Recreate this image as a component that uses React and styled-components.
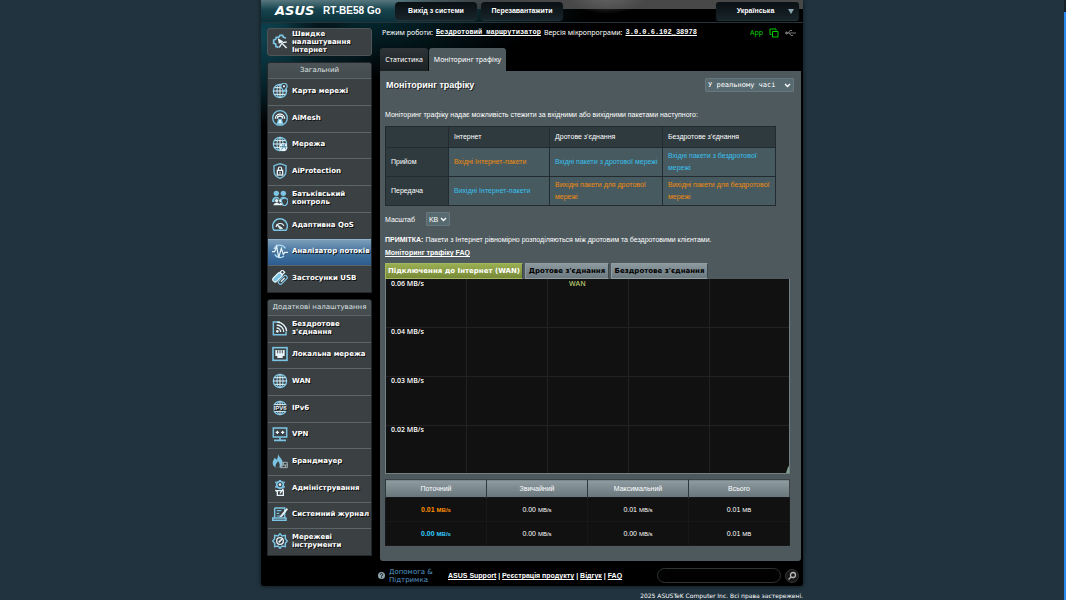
import styled, { createGlobalStyle } from 'styled-components'

const GlobalStyle = createGlobalStyle`
    * {
        box-sizing: border-box;
    }

    body {
        margin: 0;
        overflow: hidden;
        background-color: #21333e;
        color: #fff;
        font: 7px/9px 'Liberation Sans', Arial, sans-serif;
    }

    a {
        color: inherit;
    }

    button, input, select {
        margin: 0;
        font: inherit;
        color: inherit;
    }
`

const Page = styled.div`
    padding-right: 2px;
`

const ScrollTrack = styled.div`
    position: fixed;
    top: 0;
    right: 0;
    bottom: 0;
    width: 2px;
    padding-top: 12px;
    background-color: #16202b;

    &::before {
        content: '';
        display: block;
        height: 100%;
        background-color: #2b8af0;
    }
`

const Shell = styled.div`
    max-width: 542px;
    margin: 0 auto;
    border-radius: 0 0 3px 3px;
    background:
        radial-gradient(ellipse 36px 60px at 58px 28px, rgba(0, 8, 12, 0.6), transparent),
        radial-gradient(ellipse 120px 90px at 0 34px, #0d4350, #062229 60%, transparent),
        radial-gradient(ellipse 160px 60px at 110px 20px, #04272f, transparent),
        #000;
    box-shadow: 0 0 4px #0b141a;
`

const Header = styled.header`
    display: flex;
    align-items: center;
    height: 23px;
    padding: 0 4px 1px 14px;
    border-bottom: 1px solid #25343a;
    background:
        radial-gradient(ellipse 40px 20px at 346px -6px, #666, transparent),
        linear-gradient(to right, transparent 25%, #484848 50%) 0 0 / 100% 9px no-repeat,
        linear-gradient(to right, transparent 25%, #000 60%),
        linear-gradient(to bottom, #57777f 0, #16434d 10px, #0b3039 23px);
`

const Logo = styled.span`
    width: 48px;
    padding-top: 1px;
    font: italic bold 13px/14px 'DejaVu Sans', sans-serif;
`

const Model = styled.span`
    width: 72px;
    padding-top: 1px;
    font-weight: bold;
    font-size: 10px;
    line-height: 14px;
    white-space: nowrap;
`

const HeaderButton = styled.button`
    width: 82px;
    height: 18px;
    margin-right: 4px;
    padding: 0;
    border: 0;
    border-radius: 4px;
    background: linear-gradient(to bottom, #0a1013, #17242a);
    box-shadow: 0 1px 1px #26353b;
    font-weight: bold;
`

const LanguageBox = styled.div`
    position: relative;
    width: 83px;
    margin-left: auto;
`

const Language = styled.select`
    display: block;
    width: 100%;
    height: 18px;
    padding: 0 18px 0 14px;
    appearance: none;
    border: 0;
    border-radius: 3px;
    background: linear-gradient(to bottom, #0a1013, #17242a);
    box-shadow: 0 1px 1px #26353b;
    font-weight: bold;
    text-align: center;
    text-align-last: center;
`

const LanguageArrow = styled.span`
    position: absolute;
    top: 7px;
    right: 5px;
    border: 3px solid transparent;
    border-top: 5px solid #8ba6b0;
    pointer-events: none;
`

const Columns = styled.div`
    display: flex;
    align-items: flex-start;
    padding: 5px 2px 0 6px;
`

const Sidebar = styled.nav`
    flex: 0 0 105px;
    margin-right: 8px;
    font-family: 'DejaVu Sans', Verdana, sans-serif;
`

const MenuGroup = styled.section`
    margin-bottom: 6px;
    overflow: hidden;
    border: 1px solid #22282b;
    border-radius: 3px 3px 0 0;
    background-color: #3b4042;
`

const MenuHeading = styled.h2`
    margin: 0;
    height: 15px;
    background: linear-gradient(to bottom, #4b5356, #444b4e);
    color: #dfe3e4;
    font-weight: normal;
    font-size: 7px;
    line-height: 15px;
    text-align: center;
    white-space: nowrap;
`

const MenuList = styled.div`
    display: grid;
    grid-template-rows: repeat(${(props) => props.$rows}, 1fr);
    height: ${(props) => props.$height}px;
`

const MenuLink = styled.a`
    display: flex;
    align-items: center;
    gap: 4px;
    min-height: 26px;
    padding: 0 0 2px 4px;
    border-top: 1px solid ${(props) => (props.$active ? '#8fb4d2' : '#5c6669')};
    background: ${(props) => (props.$active ? 'linear-gradient(to bottom, #7b9dba, #44729d 50%, #2c5d90)' : '#3b4042')};
    font-weight: bold;
    line-height: 8px;
    text-decoration: none;
    text-shadow: 1px 1px 0 #111;

    svg {
        flex: none;
    }
`

const WizardLink = styled(MenuLink)`
    height: 28px;
    margin-bottom: 6px;
    padding: 0 0 0 4px;
    border: 1px solid #4c5558;
    border-radius: 3px;
`

const Main = styled.main`
    flex: 1;
    min-width: 0;
`

const InfoBar = styled.div`
    display: flex;
    align-items: center;
    gap: 3px;
    height: 9px;
    padding: 0 5px 0 2px;
    font-family: 'Noto Sans', sans-serif;
    white-space: nowrap;
`

const MonoLink = styled.a`
    font: bold 7px/9px 'Liberation Mono', monospace;
`

const Status = styled.span`
    display: flex;
    align-items: center;
    gap: 6px;
    margin-left: auto;
    color: #0c0;
`

const PageTabs = styled.div`
    display: flex;
    gap: 1px;
    margin-top: 11px;
`

const PageTab = styled.button`
    width: ${(props) => props.$width}px;
    height: 23px;
    padding: 0;
    border: 0;
    border-radius: 3px 3px 0 0;
    background: ${(props) => (props.$active ? '#4d595d' : 'linear-gradient(to bottom, #2d3437, #1c2123)')};
    font-family: 'Noto Sans', sans-serif;
    white-space: nowrap;
`

const Panel = styled.div`
    padding: 7px 11px 15px 5px;
    border-radius: 0 0 3px 3px;
    background-color: #4d595d;
`

const TitleRow = styled.div`
    display: flex;
    align-items: center;
    justify-content: space-between;
    margin-right: -4px;
    padding-left: 1px;
`

const Title = styled.h1`
    margin: 0;
    font-size: 9px;
    line-height: 14px;
    text-shadow: 1px 1px 0 #222;
`

const SelectBox = styled.div`
    position: relative;

    svg {
        position: absolute;
        top: 5px;
        right: 3px;
        pointer-events: none;
    }
`

const Select = styled.select`
    display: block;
    width: ${(props) => props.$width}px;
    height: 14px;
    padding: 0 2px;
    appearance: none;
    border: 1px solid #69777d;
    border-radius: 1px;
    background-color: #576a70;
    font-family: ${(props) => (props.$mono ? "'DejaVu Sans Mono', monospace" : 'inherit')};
`

const Text = styled.p`
    margin: 0;
    white-space: nowrap;
`

const Intro = styled(Text)`
    margin-top: 18px;
`

const FormTable = styled.table`
    width: 391px;
    margin-top: 7px;
    table-layout: fixed;
    border-collapse: collapse;
    line-height: 12px;

    th, td {
        height: 29px;
        padding: 0 0 0 5px;
        border: 1px solid #222c30;
        text-align: left;
        font-weight: normal;
    }

    th {
        background-color: #2f3a3e;
    }

    thead th {
        height: 21px;
    }

    td {
        background-color: #475a5f;
    }
`

const PacketCell = styled.td`
    color: ${(props) => (props.$incoming ? '#f08c10' : '#38c0ee')};
`

const ScaleRow = styled.div`
    display: flex;
    align-items: center;
    gap: 11px;
    margin-top: 6px;
`

const Note = styled(Text)`
    margin: 9px 0 4px;
`

const GraphTabs = styled.div`
    display: flex;
    gap: 2px;
    margin-top: 6px;
`

const GraphTab = styled.button`
    width: ${(props) => props.$width}px;
    height: 16px;
    padding: 0;
    border: 1px solid ${(props) => (props.$active ? '#a3b760' : '#8f9da3')};
    border-right-color: #3c474b;
    background: ${(props) => (props.$active
        ? 'linear-gradient(to bottom, #9aae52, #788a37)'
        : 'linear-gradient(to bottom, #8b989e, #6c7a80)')};
    color: ${(props) => (props.$active ? '#fff' : '#000')};
    font: bold 7px/9px 'DejaVu Sans', Verdana, sans-serif;
    white-space: nowrap;
`

const Graph = styled.svg`
    display: block;
    width: 100%;
    height: 195px;
    border: 1px solid #727f83;
    border-top: 0;
    background-color: #111;
    font: 600 7px 'Open Sans', sans-serif;
`

const StatsTable = styled.table`
    width: 100%;
    margin-top: 5px;
    table-layout: fixed;
    border-collapse: collapse;
    border: 1px solid #3a4347;

    th {
        height: 18px;
        padding: 0;
        border-left: 1px solid #2f383c;
        background: linear-gradient(to bottom, #8e9ba1, #68767c);
        font-weight: normal;
    }

    td {
        height: 24px;
        padding: 0;
        border: 1px solid #181818;
        background-color: #111;
        text-align: center;
    }
`

const Value = styled.span`
    color: ${(props) => props.$color || '#fff'};
    font-weight: ${(props) => (props.$color ? 'bold' : 'normal')};

    small {
        font-size: 6px;
    }
`

const Footer = styled.footer`
    display: flex;
    align-items: center;
    height: 24px;
    padding: 3px 4px 0 117px;
`

const Help = styled.a`
    display: flex;
    align-items: center;
    gap: 4px;
    width: 70px;
    color: #569ac7;
    font: 7px/8px 'DejaVu Sans', Verdana, sans-serif;
    text-decoration: none;

    svg {
        flex: none;
    }
`

const FooterLinks = styled.div`
    font-weight: bold;
    white-space: nowrap;
`

const SearchBox = styled.div`
    display: flex;
    align-items: center;
    gap: 4px;
    margin-left: auto;
`

const SearchInput = styled.input`
    width: 124px;
    height: 15px;
    padding: 0 6px;
    border: 1px solid #2d3234;
    border-radius: 8px;
    background-color: #020202;
`

const SearchButton = styled.button`
    display: flex;
    align-items: center;
    justify-content: center;
    width: 14px;
    height: 14px;
    padding: 0;
    border: 1px solid #333;
    border-radius: 7px;
    background-color: #1a1a1a;
`

const Copyright = styled.p`
    max-width: 542px;
    margin: 6px auto 0;
    font: 6px/8px 'DejaVu Sans', Verdana, sans-serif;
    text-align: right;
`

const B = '#7cc4e4'
const W = '#e6f4fa'

const globe = (
    <g fill="none" stroke={B} strokeWidth="2">
        <circle cx="12" cy="12" r="10" />
        <ellipse cx="12" cy="12" rx="4.5" ry="10" />
        <path d="M12 2v20M2 12h20M4 7h16M4 17h16" stroke={W} strokeWidth="1.5" />
    </g>
)

const icons = {
    wizard: (
        <>
            <path d="M10 20l-4-1-.5-4-3-1V9l3-1 1-3 4-.5L12 2h4l1 3 4 1" fill="none" stroke={B} strokeWidth="2.6" />
            <path d="M11 10l11 11M14 15l-3 5M16 13l6-1M10 8l1 5 4-2z" fill={W} stroke={W} strokeWidth="2" />
        </>
    ),
    map: (
        <>
            {globe}
            <path d="M18 13l-4-6a4.6 4.6 0 1 1 8 0z" fill="#3b4042" stroke={B} strokeWidth="1.8" />
            <circle cx="18" cy="5" r="1.6" fill={W} />
        </>
    ),
    mesh: (
        <g fill="none" stroke={B} strokeWidth="2">
            <circle cx="12" cy="12" r="11" />
            <path d="M5 13a7 7 0 0 1 14 0M8 13a4 4 0 0 1 8 0" stroke={W} />
            <path d="M8 21l2-7h4l2 7z" fill={W} />
        </g>
    ),
    network: (
        <>
            {globe}
            <circle cx="17" cy="17" r="6" fill={W} />
            <path d="M12 16h10M14 20c3-1 3-5 2-8M19 12c-1 3 1 6 2 8" stroke="#3b7f9d" fill="none" strokeWidth="1.3" />
        </>
    ),
    shield: (
        <>
            <path d="M12 1l9 3v8c0 5-4 9-9 11-5-2-9-6-9-11V4z" fill="none" stroke={B} strokeWidth="2" />
            <rect x="8" y="11" width="8" height="7" fill="none" stroke={W} strokeWidth="2" />
            <path d="M9.5 11V8.5a2.5 2.5 0 0 1 5 0V11M12 13v3" fill="none" stroke={W} strokeWidth="1.7" />
        </>
    ),
    family: (
        <>
            <circle cx="6.5" cy="5" r="4" fill={B} />
            <circle cx="17" cy="5" r="4" fill={B} />
            <path d="M0 18c0-6 3-8 6.500-8s5 2 5 5c0-3 2-5 5.500-5 4 0 6 3 6 7z" fill={B} />
            <circle cx="7" cy="16" r="3" fill={W} stroke="#3b4042" />
            <circle cx="13" cy="16" r="3" fill={W} stroke="#3b4042" />
            <path d="M2 23c1-4 4-4 5-4s3 0 4 2c1-2 4-2 6 2z" fill={W} />
            <path d="M19 12l5 2c0 5-1 8-5 10-4-2-5-5-5-10z" fill="#3b4042" stroke={B} strokeWidth="1.8" />
        </>
    ),
    gauge: (
        <g fill="none" stroke={B} strokeWidth="2.2">
            <path d="M3 20a11 11 0 1 1 18 0z" />
            <path d="M6 15a6.500 6.500 0 0 1 12-2" stroke={W} strokeWidth="1.7" />
            <path d="M12 18l-5-7 9 6z" fill={W} stroke={W} strokeWidth="1" />
        </g>
    ),
    pulse: (
        <>
            <path d="M3 9a9.500 9.500 0 0 1 17-1M4 17a9.500 9.500 0 0 0 14 3" fill="none" stroke="#a9dcf5" strokeWidth="2" />
            <path d="M0 13h4l3-8 3 17 4-14 3 9 2-3h5" fill="none" stroke={W} strokeWidth="1.8" />
        </>
    ),
    usb: (
        <g transform="rotate(45 12 12)" strokeWidth="1.8">
            <rect x="5" y="6" width="7" height="16" rx="3" fill={B} stroke={W} />
            <rect x="6" y="1" width="5" height="5" fill="none" stroke={W} />
            <rect x="14" y="3" width="6" height="16" rx="3" fill="none" stroke={B} />
            <path d="M17 7v8" stroke={W} />
        </g>
    ),
    wireless: (
        <>
            <path d="M12 3H2v19h19v-4" fill="none" stroke={B} strokeWidth="2.2" />
            <path d="M7 12a6 6 0 0 1 6 6M7 7.500A10.500 10.500 0 0 1 17.500 18M8 3a15 15 0 0 1 14 14" fill="none" stroke={W} strokeWidth="2" />
            <circle cx="8" cy="17" r="2" fill={W} />
        </>
    ),
    lan: (
        <>
            <rect x="1.5" y="2.5" width="21" height="19" fill="none" stroke={B} strokeWidth="2.4" />
            <path d="M5 6h14v9h-3v3H8v-3H5z" fill={W} />
            <path d="M8.500 6v5M12 6v5M15.500 6v5" stroke="#3b4042" strokeWidth="1.3" />
        </>
    ),
    globe,
    ipv6: (
        <>
            {globe}
            <rect x="0" y="8" width="24" height="8" fill="#3b4042" />
            <text x="12" y="15" textAnchor="middle" fontFamily="Liberation Sans" fontWeight="bold" fontSize="9" fill={W}>IPV6</text>
        </>
    ),
    vpn: (
        <>
            <rect x="2" y="3" width="20" height="13.5" fill="none" stroke={B} strokeWidth="2.3" />
            <path d="M5.500 9.500h5M13.500 9.500h5M8 7v5M16 7v5" stroke={W} strokeWidth="2" />
            <path d="M12 17v4M3 21.500h18" stroke={B} strokeWidth="2.4" />
        </>
    ),
    firewall: (
        <>
            <path d="M9 1c1 5 7 7 7 14 0 4-2 7-7 7-5 0-8-3-8-7 0-4 2-5 3-8l3 3c2-3 2-5 2-9z" fill={B} />
            <path d="M9 12c3 4 3 6 2 10H6c-2-4 1-6 3-10z" fill="#3b4042" />
            <path d="M13 14h10v8H12M12 18h11M17 14v4M20 18v4M15 18v4" fill="none" stroke="#a8b7bd" strokeWidth="1.4" />
        </>
    ),
    admin: (
        <>
            <circle cx="12" cy="7" r="5" fill="none" stroke={B} strokeWidth="2.6" />
            <path d="M12 0v2M12 12v2M5 3l2 1M17 10l2 1M5 11l2-1M17 4l2-1" stroke={B} strokeWidth="2.8" />
            <circle cx="12" cy="7" r="2" fill={W} />
            <path d="M8 16h9v7H8zM5 15l3 3M17 13l-5 7" fill="none" stroke={W} strokeWidth="2" />
        </>
    ),
    log: (
        <>
            <path d="M4 3h15v15M4 3v14M1 21.500h20V18H1z" fill="none" stroke={B} strokeWidth="2.2" />
            <path d="M7 7h7M7 11h4M7 15h5" stroke={B} strokeWidth="1.7" />
            <path d="M22 3l-9 11-2 3 4-1 9-11z" fill={W} />
        </>
    ),
    tools: (
        <>
            <path d="M12 1l3 3.500 5-1v5l3 3.500-3 3.500v5l-5-1-3 3.500-3-3.500-5 1v-5L1 12l3-3.500v-5l5 1z" fill="none" stroke={B} strokeWidth="2.2" />
            <circle cx="12" cy="12" r="5" fill="none" stroke={W} strokeWidth="2" />
            <path d="M10 14l5-5" stroke={W} strokeWidth="2.4" />
        </>
    ),
}

const Icon = ({ name }) => (
    <svg width="16" height="16" viewBox="0 0 24 24" aria-hidden="true">{icons[name]}</svg>
)

const Chevron = () => (
    <svg width="7" height="5" viewBox="0 0 7 5" aria-hidden="true">
        <path d="M1 1l2.500 2.500L6 1" fill="none" stroke="#fff" strokeWidth="1.3" />
    </svg>
)

const general = [
    ['map', 'Карта мережі'],
    ['mesh', 'AiMesh'],
    ['network', 'Мережа'],
    ['shield', 'AiProtection'],
    ['family', 'Батьківський контроль'],
    ['gauge', 'Адаптивна QoS'],
    ['pulse', 'Аналізатор потоків'],
    ['usb', 'Застосунки USB'],
]

const advanced = [
    ['wireless', "Бездротове з'єднання"],
    ['lan', 'Локальна мережа'],
    ['globe', 'WAN'],
    ['ipv6', 'IPv6'],
    ['vpn', 'VPN'],
    ['firewall', 'Брандмауер'],
    ['admin', 'Адміністрування'],
    ['log', 'Системний журнал'],
    ['tools', 'Мережеві інструменти'],
]

const stats = [
    { color: '#ff9000', current: '0.01', average: '0.00', max: '0.01', total: '0.01' },
    { color: '#3cf', current: '0.00', average: '0.00', max: '0.00', total: '0.01' },
]

const Menu = ({ title, items, height, active }) => (
    <MenuGroup>
        <MenuHeading>{title}</MenuHeading>
        <MenuList $rows={items.length} $height={height}>
            {items.map(([icon, label]) => (
                <MenuLink key={icon} href="#" $active={icon === active}>
                    <Icon name={icon} />
                    <span>{label}</span>
                </MenuLink>
            ))}
        </MenuList>
    </MenuGroup>
)

const TrafficGraph = () => (
    <Graph role="img" aria-label="WAN">
        <path d="M0 48.500H405M0 97.500H405M0 146.500H405M80.500 0V195M161.500 0V195M242.500 0V195M323.500 0V195" stroke="#222" />
        {['0.06', '0.04', '0.03', '0.02'].map((value, i) => (
            <text key={value} x="5" y={7 + i * 49 - (i > 0 ? 1 : 0)} fill="#fff">{value} MB/s</text>
        ))}
        <text x="183" y="7" fill="#b4c46c">WAN</text>
        <path d="M400 194l2-6 2-2v8z" fill="#7fa08c" />
    </Graph>
)

const Stat = ({ value, unit, color }) => (
    <td>
        <Value $color={color}>{value} <small>{unit}</small></Value>
    </td>
)

const App = () => (
    <Page>
        <GlobalStyle />
        <Shell>
            <Header>
                <Logo>ASUS</Logo>
                <Model>RT-BE58 Go</Model>
                <HeaderButton>Вихід з системи</HeaderButton>
                <HeaderButton>Перезавантажити</HeaderButton>
                <LanguageBox>
                    <Language aria-label="Мова">
                        <option>Українська</option>
                    </Language>
                    <LanguageArrow />
                </LanguageBox>
            </Header>
            <Columns>
                <Sidebar>
                    <WizardLink href="#">
                        <Icon name="wizard" />
                        <span>Швидке налаштування Інтернет</span>
                    </WizardLink>
                    <Menu title="Загальний" items={general} height={214} active="pulse" />
                    <Menu title="Додаткові налаштування" items={advanced} height={240} />
                </Sidebar>
                <Main>
                    <InfoBar>
                        <span>Режим роботи:</span>
                        <MonoLink href="#">Бездротовий маршрутизатор</MonoLink>
                        <span>Версія мікропрограми:</span>
                        <MonoLink href="#">3.0.0.6.102_38978</MonoLink>
                        <Status>
                            App
                            <svg width="10" height="10" viewBox="0 0 10 10" fill="none" stroke="#0c0" aria-hidden="true">
                                <path d="M1 6.500V1H7V2.500M1 6.500H2.500M3.500 3.500H9V9H3.500z" strokeWidth="1" />
                            </svg>
                            <svg width="11" height="8" viewBox="0 0 11 8" fill="none" stroke="#777" aria-hidden="true">
                                <path d="M1 4H11M3 4L5 1.500H7M4 4L6 6.500H8" />
                                <circle cx="1.5" cy="4" r="1" fill="#777" />
                            </svg>
                        </Status>
                    </InfoBar>
                    <PageTabs>
                        <PageTab $width={48}>Статистика</PageTab>
                        <PageTab $width={77} $active>Моніторинг трафіку</PageTab>
                    </PageTabs>
                    <Panel>
                        <TitleRow>
                            <Title>Моніторинг трафіку</Title>
                            <SelectBox>
                                <Select $width={89} $mono aria-label="Період">
                                    <option>У реальному часі</option>
                                </Select>
                                <Chevron />
                            </SelectBox>
                        </TitleRow>
                        <Intro>Моніторинг трафіку надає можливість стежити за вхідними або вихідними пакетами наступного:</Intro>
                        <FormTable>
                            <colgroup>
                                <col width="63" />
                                <col width="101" />
                                <col width="113" />
                                <col width="113" />
                            </colgroup>
                            <thead>
                                <tr>
                                    <th />
                                    <th>Інтернет</th>
                                    <th>Дротове з'єднання</th>
                                    <th>Бездротове з'єднання</th>
                                </tr>
                            </thead>
                            <tbody>
                                <tr>
                                    <th>Прийом</th>
                                    <PacketCell $incoming>Вхідні Інтернет-пакети</PacketCell>
                                    <PacketCell>Вхідні пакети з дротової мережі</PacketCell>
                                    <PacketCell>Вхідні пакети з бездротової мережі</PacketCell>
                                </tr>
                                <tr>
                                    <th>Передача</th>
                                    <PacketCell>Вихідні Інтернет-пакети</PacketCell>
                                    <PacketCell $incoming>Вихідні пакети для дротової мережі</PacketCell>
                                    <PacketCell $incoming>Вихідні пакети для бездротової мережі</PacketCell>
                                </tr>
                            </tbody>
                        </FormTable>
                        <ScaleRow>
                            <label htmlFor="scale">Масштаб</label>
                            <SelectBox>
                                <Select id="scale" $width={24}>
                                    <option>KB</option>
                                </Select>
                                <Chevron />
                            </SelectBox>
                        </ScaleRow>
                        <Note><b>ПРИМІТКА:</b> Пакети з Інтернет рівномірно розподіляються між дротовим та бездротовими клієнтами.</Note>
                        <Text><a href="#"><b>Моніторинг трафіку FAQ</b></a></Text>
                        <GraphTabs>
                            <GraphTab $width={138} $active>Підключення до Інтернет (WAN)</GraphTab>
                            <GraphTab $width={84}>Дротове з'єднання</GraphTab>
                            <GraphTab $width={97}>Бездротове з'єднання</GraphTab>
                        </GraphTabs>
                        <TrafficGraph />
                        <StatsTable>
                            <thead>
                                <tr>
                                    <th>Поточний</th>
                                    <th>Звичайний</th>
                                    <th>Максимальний</th>
                                    <th>Всього</th>
                                </tr>
                            </thead>
                            <tbody>
                                {stats.map((row) => (
                                    <tr key={row.color}>
                                        <Stat value={row.current} unit="MB/s" color={row.color} />
                                        <Stat value={row.average} unit="MB/s" />
                                        <Stat value={row.max} unit="MB/s" />
                                        <Stat value={row.total} unit="MB" />
                                    </tr>
                                ))}
                            </tbody>
                        </StatsTable>
                    </Panel>
                </Main>
            </Columns>
            <Footer>
                <Help href="#">
                    <svg width="7" height="7" viewBox="0 0 7 7" aria-hidden="true">
                        <circle cx="3.5" cy="3.5" r="3.5" fill="#8fa3ad" />
                        <path d="M2.300 2.700a1.200 1.200 0 1 1 1.200 1.200v.6M3.500 5v.9" fill="none" stroke="#111" strokeWidth="0.9" />
                    </svg>
                    <span>Допомога & Підтримка</span>
                </Help>
                <FooterLinks>
                    <a href="#">ASUS Support</a> | <a href="#">Реєстрація продукту</a> | <a href="#">Відгук</a> | <a href="#">FAQ</a>
                </FooterLinks>
                <SearchBox>
                    <SearchInput type="text" aria-label="Пошук" />
                    <SearchButton aria-label="Шукати">
                        <svg width="10" height="10" viewBox="0 0 10 10" fill="none" stroke="#bbb" aria-hidden="true">
                            <circle cx="6" cy="4" r="2.5" strokeWidth="1.3" />
                            <path d="M4 6L1.500 8.500" strokeWidth="1.3" />
                        </svg>
                    </SearchButton>
                </SearchBox>
            </Footer>
        </Shell>
        <Copyright>2025 ASUSTeK Computer Inc. Всі права застережені.</Copyright>
        <ScrollTrack />
    </Page>
)

export default App
